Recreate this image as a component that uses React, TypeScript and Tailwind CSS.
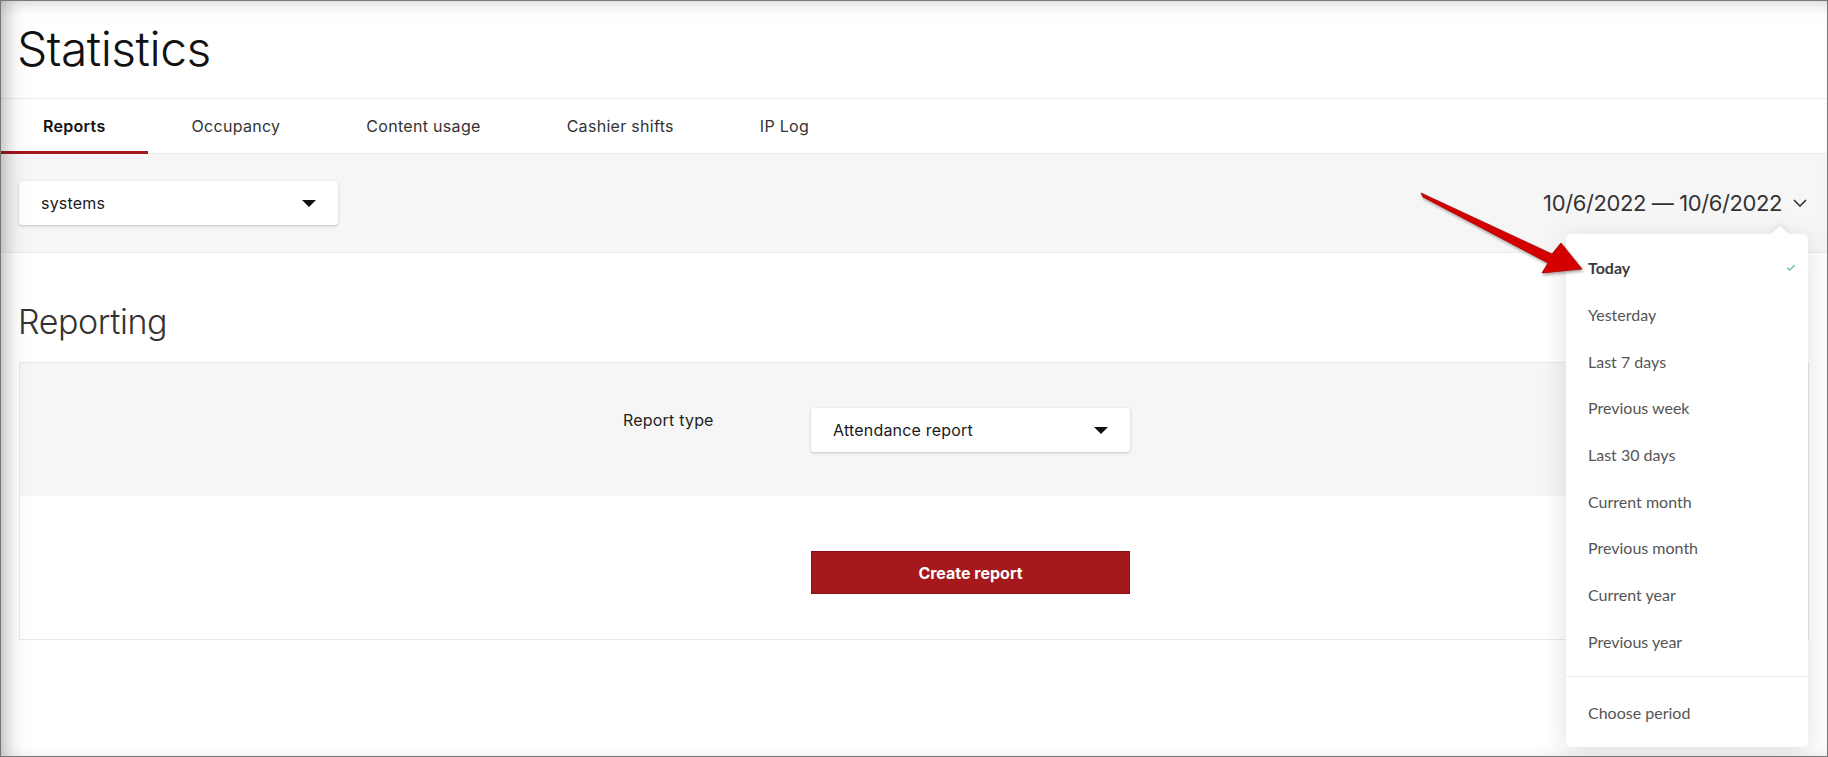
import { Check } from "lucide-react";

const tabs = ["Reports", "Occupancy", "Content usage", "Cashier shifts", "IP Log"];

const periods = [
  "Today",
  "Yesterday",
  "Last 7 days",
  "Previous week",
  "Last 30 days",
  "Current month",
  "Previous month",
  "Current year",
  "Previous year",
];

function Caret() {
  return (
    <svg width="14" height="7" viewBox="0 0 14 7" className="shrink-0">
      <path d="M0 0h14L7 7z" fill="#111" />
    </svg>
  );
}

function Select({ value }: { value: string }) {
  return (
    <div className="w-[319px] h-[44px] bg-white rounded-[3px] shadow-[0_1px_3px_rgba(0,0,0,0.22)] px-[22px] flex items-center justify-between">
      <span className="text-[16px] tracking-[0.2px] text-[#1a1a1a]">{value}</span>
      <Caret />
    </div>
  );
}

function PeriodMenu() {
  return (
    <div className="absolute left-[1566px] top-[234px] w-[242px] bg-white rounded-[5px] shadow-[0_6px_28px_rgba(0,0,0,0.13)] font-['Lato',sans-serif] text-[16px] text-[#555]">
      <div className="absolute right-[22px] -top-[6px] w-[12px] h-[12px] bg-white rotate-45 shadow-[-2px_-2px_4px_rgba(0,0,0,0.05)]" />
      <ul className="relative pt-[11px] pb-[11px]">
        {periods.map((p, i) => (
          <li key={p} className="h-[46.7px] pl-[22px] pr-[12px] flex items-center justify-between">
            <span className={i === 0 ? "font-bold text-[#3a3a3a]" : ""}>{p}</span>
            {i === 0 && <Check size={10} strokeWidth={3} color="#5cc690" />}
          </li>
        ))}
      </ul>
      <div className="border-t border-[#ebebeb] pt-[12px] pb-[11px]">
        <div className="h-[47px] pl-[22px] flex items-center">Choose period</div>
      </div>
    </div>
  );
}

function Arrow() {
  return (
    <svg
      className="absolute left-0 top-0 pointer-events-none"
      width="1828"
      height="757"
      viewBox="0 0 1828 757"
    >
      <defs>
        <filter id="sh" x="-10%" y="-10%" width="120%" height="130%">
          <feDropShadow dx="1" dy="2" stdDeviation="1.5" floodColor="#000" floodOpacity="0.35" />
        </filter>
      </defs>
      <polygon
        points="1421,193 1552,254 1561,243 1582,269 1542,273 1548,263 1423,197"
        fill="#d40000"
        stroke="#a80000"
        strokeWidth="0.8"
        strokeLinejoin="round"
        filter="url(#sh)"
      />
    </svg>
  );
}

export default function App() {
  return (
    <div className="relative w-[1828px] h-[757px] overflow-hidden bg-white font-['Inter',sans-serif] text-[#222]">
      <header className="h-[99px] border-b border-[#ececec] flex items-center pl-[17px]">
        <h1 className="text-[48px] font-light leading-none tracking-[-0.5px] text-[#111]">Statistics</h1>
      </header>

      <nav className="h-[55px] border-b border-[#ececec] flex">
        {tabs.map((t, i) => (
          <div
            key={t}
            className={
              i === 0
                ? "relative px-[43px] flex items-center text-[16px] tracking-[0.3px] font-semibold text-[#111]"
                : "relative px-[43px] flex items-center text-[16px] tracking-[0.3px] text-[#333]"
            }
          >
            {t}
            {i === 0 && <span className="absolute left-0 right-0 -bottom-px h-[3px] bg-[#a5181c]" />}
          </div>
        ))}
      </nav>

      <div className="h-[99px] bg-[#f6f6f6] border-b border-[#ececec] flex items-center justify-between pl-[19px] pr-[21px]">
        <Select value="systems" />
        <div className="flex items-center gap-[11px] text-[22px] tracking-[-0.4px] text-[#333]">
          <span>10/6/2022 — 10/6/2022</span>
          <svg width="14" height="8" viewBox="0 0 14 8">
            <path d="M1 1l6 6 6-6" fill="none" stroke="#333" strokeWidth="1.6" />
          </svg>
        </div>
      </div>

      <h2 className="pl-[18px] pt-[52px] pb-[23px] text-[34px] font-light leading-none tracking-[-0.4px] text-[#333]">Reporting</h2>

      <section className="mx-[19px] border border-[#e8e8e8]">
        <div className="bg-[#f6f6f6] pt-[45px] pb-[44px] pl-[603px] flex items-start">
          <label className="w-[188px] text-[16px] leading-6 tracking-[0.2px] text-[#222]">Report type</label>
          <Select value="Attendance report" />
        </div>
        <div className="pt-[55px] pb-[45px] pl-[791px]">
          <button className="w-[319px] h-[43px] bg-[#a5181c] border border-[#8e1014] text-white text-[16px] font-bold">
            Create report
          </button>
        </div>
      </section>

      <PeriodMenu />
      <Arrow />

      <div className="absolute inset-0 pointer-events-none border border-[#767676] shadow-[inset_14px_0_22px_-12px_rgba(0,0,0,0.35),inset_0_14px_20px_-14px_rgba(0,0,0,0.15)]" />
    </div>
  );
}
